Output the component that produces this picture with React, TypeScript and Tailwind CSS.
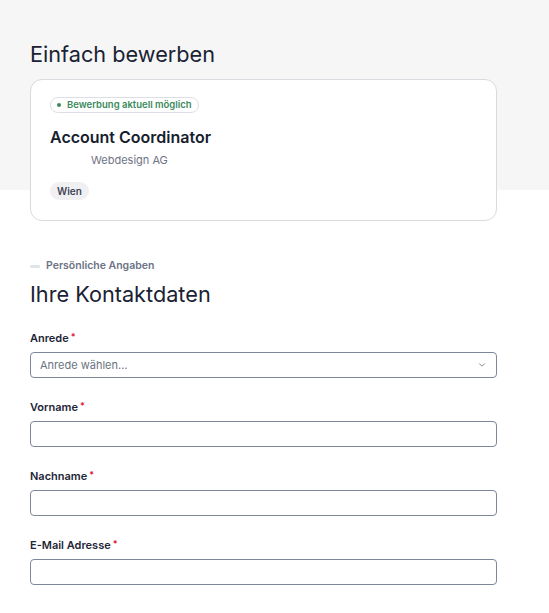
import { ChevronDown } from "lucide-react";

const fields = ["Vorname", "Nachname", "E-Mail Adresse"];

const Label = ({ text }: { text: string }) => (
  <label className="flex h-4 items-center text-[11px] font-semibold leading-4 text-[#1e2638]">
    {text}
    <span className="ml-[2px] -mt-[2px] text-[9px] leading-3 text-[#e0102f]">*</span>
  </label>
);

const App = () => {
  return (
    <div className="min-h-[613px] bg-[linear-gradient(to_bottom,#f6f6f7_190px,#ffffff_190px)] font-['Inter',sans-serif] text-[#1a2233]">
      <div className="w-[467px] ml-[30px] pt-10 pb-6">
        <h1 className="text-[21.7px] leading-7 font-normal text-[#1a2233]">Einfach bewerben</h1>

        <div className="mt-[11px] flex flex-col items-start rounded-xl border border-[#d9d9e0] bg-white px-[19px] pt-[17px] pb-[20px]">
          <span className="flex h-4 items-center gap-[6px] rounded-full border border-[#dcdfe6] px-[6px] text-[9.5px] font-semibold text-[#3a8a5c]">
            <span className="h-[4px] w-[4px] rounded-full bg-[#3a8a5c]" />
            Bewerbung aktuell möglich
          </span>
          <h2 className="mt-3 text-[16px] leading-6 font-semibold text-[#161e2e]">Account Coordinator</h2>
          <div className="mt-[3px] flex h-4 items-center">
            <div className="w-[41px]" />
            <span className="text-[11px] text-[#6e7385]">Webdesign AG</span>
          </div>
          <span className="mt-[14px] flex h-[18px] items-center rounded-full bg-[#f0f0f3] px-[7px] text-[10px] font-semibold text-[#3f4456]">
            Wien
          </span>
        </div>

        <div className="mt-[37px] flex h-4 items-center gap-[6px]">
          <span className="h-[3px] w-[10px] rounded-full bg-[#dfe3ea]" />
          <span className="text-[10.5px] font-semibold text-[#6b7385]">Persönliche Angaben</span>
        </div>
        <h2 className="mt-[6px] text-[21.7px] leading-7 font-normal text-[#1a2233]">Ihre Kontaktdaten</h2>

        <div className="mt-[22px]">
          <Label text="Anrede" />
          <div className="mt-[6px] flex h-[26px] items-center justify-between rounded-[4px] border border-[#7d8799] px-[9px]">
            <span className="text-[11px] text-[#6b7280]">Anrede wählen...</span>
            <ChevronDown className="h-[10px] w-[10px] text-[#6b7280]" strokeWidth={2} />
          </div>
        </div>

        {fields.map((f) => (
          <div key={f} className="mt-[21px]">
            <Label text={f} />
            <input
              type="text"
              className="mt-[6px] block h-[26px] w-full rounded-[4px] border border-[#7d8799] bg-white px-[9px] text-[11px] outline-none"
            />
          </div>
        ))}
      </div>
    </div>
  );
};

export default App;
